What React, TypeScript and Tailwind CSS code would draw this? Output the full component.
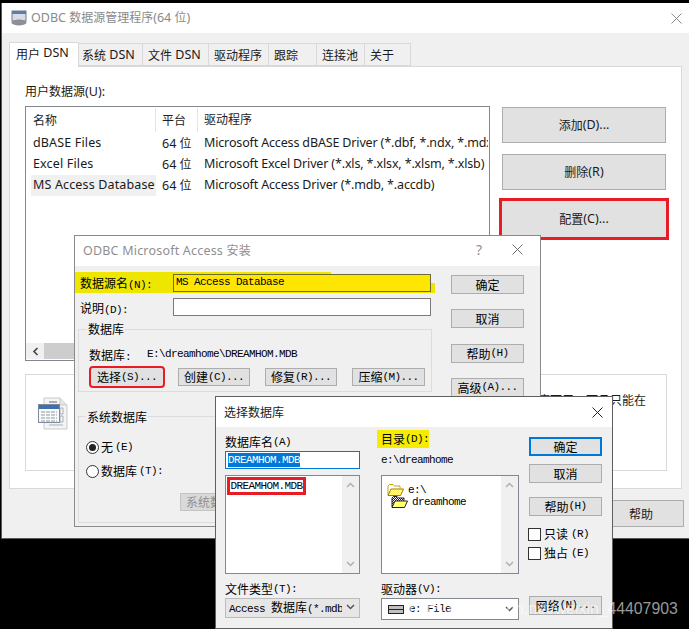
import React from "react";

const SANS = "font-['Noto_Sans','Noto_Sans_CJK_SC',sans-serif]";

function split(s: string) {
  return s.split(/([\u3000-\u9fff\uff00-\uffef]+)/).filter(Boolean);
}
const isCjk = (p: string) => /[\u3000-\u9fff\uff00-\uffef]/.test(p);

function M({ children }: { children: string }) {
  return (
    <>
      {split(children).map((p, i) =>
        isCjk(p) ? (
          <span key={i} className="font-['Noto_Sans_CJK_SC',sans-serif] text-[12px]">{p}</span>
        ) : (
          <span key={i} className="font-['Liberation_Mono',monospace] text-[11px] tracking-[-0.6px] whitespace-pre">{p}</span>
        )
      )}
    </>
  );
}

function S({ children }: { children: string }) {
  return (
    <>
      {split(children).map((p, i) =>
        isCjk(p) ? (
          <span key={i} className="font-['Noto_Sans_CJK_SC',sans-serif] text-[12px]">{p}</span>
        ) : (
          <span key={i} className="font-['Noto_Sans',sans-serif] text-[12.5px] whitespace-pre">{p}</span>
        )
      )}
    </>
  );
}

function DBtn({ children, className = "", edge = "border border-[#adadad]" }: { children: string; className?: string; edge?: string }) {
  return (
    <div className={`flex items-center justify-center bg-[#e1e1e1] text-black leading-none whitespace-nowrap ${edge} ${className}`}>
      <M>{children}</M>
    </div>
  );
}

function X({ className = "", color = "#6f6f6f" }: { className?: string; color?: string }) {
  return (
    <svg width="11" height="11" viewBox="0 0 11 11" className={className}>
      <path d="M0.5 0.5 L10.5 10.5 M10.5 0.5 L0.5 10.5" stroke={color} strokeWidth="1" fill="none" />
    </svg>
  );
}

function Chevron({ up = false, color = "#b0b0b0" }: { up?: boolean; color?: string }) {
  return (
    <svg width="9" height="6" viewBox="0 0 9 6">
      <path d={up ? "M1 5 L4.5 1.5 L8 5" : "M1 1 L4.5 4.5 L8 1"} stroke={color} strokeWidth="1.5" fill="none" />
    </svg>
  );
}

function ScrollV() {
  return (
    <div className="w-[17px] bg-[#f0f0f0] flex flex-col items-center justify-between py-[6px]">
      <Chevron up />
      <Chevron />
    </div>
  );
}

function Folder({ dither = false }: { dither?: boolean }) {
  const id = dither ? "d2" : "d1";
  return (
    <svg width="17" height="12" viewBox="0 0 17 12" className="shrink-0">
      <defs>
        <pattern id={id} width="2" height="2" patternUnits="userSpaceOnUse">
          <rect width="2" height="2" fill={dither ? "#ffff66" : "#ffe95a"} />
          <rect width="1" height="1" fill="#ffffff" />
          <rect x="1" y="1" width="1" height="1" fill="#ffffff" />
        </pattern>
        <pattern id={`${id}k`} width="2" height="2" patternUnits="userSpaceOnUse">
          <rect width="2" height="2" fill="#ffffff" />
          <rect width="1" height="1" fill="#222222" />
          <rect x="1" y="1" width="1" height="1" fill="#222222" />
        </pattern>
      </defs>
      <path
        d="M1 11 V2 L2.5 0.5 H6 L7.5 2 H13 V4.5"
        fill={dither ? `url(#${id}k)` : "#ffffff"}
        stroke={dither ? "#222" : "#c9a400"}
        strokeWidth="1"
      />
      <path d="M1 11.5 L4 5 H16.5 L13.5 11.5 Z" fill={`url(#${id})`} stroke={dither ? "#222" : "#9a8000"} strokeWidth="1" />
    </svg>
  );
}

function TableIcon() {
  return (
    <svg width="32" height="33" viewBox="0 0 32 33">
      <path d="M6 1 H22 L29 8 V32 H6 Z" fill="#f4f4f4" stroke="#c9c9c9" />
      <path d="M22 1 V8 H29" fill="#e6e6e6" stroke="#c9c9c9" />
      <path d="M22 11 h3 v6 h-3 z M22 19 h3 v6 h-3 z M11 28 h14" fill="none" stroke="#a8aeb6" />
      <path d="M11 5 h8" stroke="#a8aeb6" strokeWidth="2" />
      <rect x="0.5" y="7.5" width="21" height="18" fill="#fafafa" stroke="#7d8a9c" />
      <rect x="1" y="8" width="20" height="4" fill="#3f6fae" />
      <path d="M3 15 H19 M3 18 H19 M3 21 H19 M3 24 H19" stroke="#8d97a5" strokeDasharray="4 1" />
    </svg>
  );
}

const tabs: [string, string][] = [
  ["系统 DSN", "w-[64px] pl-[3px]"],
  ["文件 DSN", "w-[66px] pl-[5px]"],
  ["驱动程序", "w-[60px] pl-[5px]"],
  ["跟踪", "w-[48px] pl-[5px]"],
  ["连接池", "w-[48px] pl-[5px]"],
  ["关于", "w-[46px] pl-[5px]"],
];

const rows = [
  ["dBASE Files", "Microsoft Access dBASE Driver (*.dbf, *.ndx, *.mdx)"],
  ["Excel Files", "Microsoft Excel Driver (*.xls, *.xlsx, *.xlsm, *.xlsb)"],
  ["MS Access Database", "Microsoft Access Driver (*.mdb, *.accdb)"],
];

function MainWindow() {
  return (
    <div className={`absolute left-[1px] top-[3px] w-[688px] h-[536px] bg-[#f0f0f0] border-l border-b border-[#5a5a5a] ${SANS} text-[12.5px] text-[#1a1a1a]`}>
      <div className="h-[30px] bg-white flex items-center pl-[9px] pr-[7px]">
        <svg width="17" height="16" viewBox="0 0 17 16">
          <rect x="1" y="1" width="14" height="10" fill="#d7dce4" stroke="#6f7a88" />
          <rect x="1" y="1" width="14" height="3" fill="#5b7fa8" />
          <ellipse cx="8" cy="12.5" rx="7.5" ry="3" fill="#8c8f94" />
        </svg>
        <span className="ml-[3px] text-[#8a8a8a] leading-none"><S>ODBC 数据源管理程序(64 位)</S></span>
        <X className="ml-auto" color="#8a8a8a" />
      </div>
      <div className="pl-[7px] pr-[7px] pt-[9px]">
        <div className="flex h-[24px] items-end">
          <div className="w-[70px] h-[25px] bg-white border border-b-0 border-[#d9d9d9] flex items-center pl-[6px] relative z-10 -mb-px pb-[3px]"><S>用户 DSN</S></div>
          {tabs.map(([t, w]) => (
            <div key={t} className={`${w} h-[23px] pt-[1px] bg-[#f0f0f0] border border-l-0 border-[#d9d9d9] flex items-center`}><S>{t}</S></div>
          ))}
        </div>
        <div className="h-[423px] bg-white border border-[#d9d9d9] px-[15px] pt-[15px]">
          <div className="h-[17px] leading-[17px]"><S>用户数据源(U):</S></div>
          <div className="flex mt-[7px] h-[255px]">
            <div className="w-[465px] h-[255px] border border-[#828790] relative overflow-hidden pl-[5px] pr-[1px]">
              <div className="flex h-[26px] items-center text-[#222]">
                <div className="w-[125px] h-[24px] pl-[2px] border-r border-[#e5e5e5] flex items-center"><S>名称</S></div>
                <div className="w-[42px] h-[24px] pl-[6px] border-r border-[#e5e5e5] flex items-center"><S>平台</S></div>
                <div className="pl-[6px]"><S>驱动程序</S></div>
              </div>
              {rows.map(([a, b], i) => (
                <div key={a} className="flex h-[21px] items-center whitespace-nowrap">
                  <div className={`w-[125px] h-full flex items-center pl-[2px] shrink-0 tracking-[0.15px] ${i === 2 ? "bg-[#f0f0f0]" : ""}`}>{a}</div>
                  <div className="w-[48px] pl-[6px] shrink-0"><S>64 位</S></div>
                  <div className="overflow-hidden w-[284px] tracking-[-0.15px]">{b}</div>
                </div>
              ))}
              <div className="absolute left-0 right-0 top-[236px] h-[16px] bg-[#f0f0f0] flex items-center pl-[6px]">
                <svg width="7" height="9" viewBox="0 0 7 9"><path d="M5.5 1 L2 4.5 L5.5 8" stroke="#444" strokeWidth="1.6" fill="none" /></svg>
                <div className="ml-[5px] w-[120px] h-full bg-[#cdcdcd]" />
              </div>
            </div>
            <div className="ml-[12px] w-[164px] flex flex-col gap-[11px] pt-[1px]">
              <div className="h-[36px] bg-[#e1e1e1] border border-[#adadad] flex items-center justify-center"><S>添加(D)...</S></div>
              <div className="h-[36px] bg-[#e1e1e1] border border-[#adadad] flex items-center justify-center"><S>删除(R)</S></div>
              <div className="h-[36px] bg-[#e1e1e1] flex items-center justify-center outline-[3px] outline-[#e81c24]"><S>配置(C)...</S></div>
            </div>
          </div>
          <div className="mt-[13px] h-[97px] w-[642px] border border-[#d9d9d9] flex items-start pl-[12px] pt-[22px]">
            <TableIcon />
            <span className="ml-auto mr-[20px] -mt-[3px] leading-none"><S>程序可用，而且只能在</S></span>
          </div>
        </div>
        <div className="flex justify-end mt-[11px] -mr-[2px]">
          <div className="w-[86px] h-[27px] bg-[#e1e1e1] border border-[#adadad] flex items-center justify-center"><S>帮助</S></div>
        </div>
      </div>
    </div>
  );
}

function AccessWindow() {
  return (
    <div className="absolute left-[74px] top-[235px] w-[467px] h-[292px] bg-[#f0f0f0] border border-[#8a8a8a]">
      <div className="h-[30px] bg-white flex items-center pl-[8px] pr-[17px] pb-[3px]">
        <span className="text-[#8f8f8f] leading-none tracking-[0.2px]"><S>ODBC Microsoft Access 安装</S></span>
        <span className={`${SANS} ml-auto mr-[30px] text-[14px] text-[#8f8f8f]`}>?</span>
        <X />
      </div>
      <div className="flex">
        <div className="w-[357px] pl-[3px] pt-[6px]">
          <div className="flex items-center h-[21px] relative">
            <div className="absolute left-[-3px] top-0 w-[256px] h-[21px] bg-[#efe600]" />
            <div className="absolute left-[253px] top-[11px] w-[104px] h-[10px] bg-[#efe600]" />
            <span className="relative w-[95px] pl-[2px] leading-none"><M>数据源名(N):</M></span>
            <div className="relative w-[258px] h-[18px] border border-[#6b6b3a] bg-[#ffe600] flex items-center pl-[2px] leading-none"><M>MS Access Database</M></div>
          </div>
          <div className="flex items-center h-[18px] mt-[5px]">
            <span className="w-[95px] pl-[2px] leading-none"><M>说明(D):</M></span>
            <div className="w-[258px] h-[18px] border border-[#7a7a7a] bg-white" />
          </div>
          <div className="relative mt-[13px] h-[63px] border border-[#dcdcdc] w-[354px] pl-[10px] pt-[17px]">
            <span className="absolute left-[8px] -top-[10px] bg-[#f0f0f0] px-[1px] leading-[16px]"><M>数据库</M></span>
            <div className="flex items-center h-[14px] leading-none">
              <span className="w-[58px]"><M>数据库:</M></span>
              <M>{"E:\\dreamhome\\DREAMHOM.MDB"}</M>
            </div>
            <div className="flex mt-[7px] ml-[2px] gap-[15px] leading-none">
              <DBtn edge="outline-[2px] outline-[#e81c24] rounded-[2px]" className="w-[72px] h-[18px]">选择(S)...</DBtn>
              <DBtn className="w-[72px] h-[18px]">创建(C)...</DBtn>
              <DBtn className="w-[72px] h-[18px]">修复(R)...</DBtn>
              <DBtn className="w-[73px] h-[18px]">压缩(M)...</DBtn>
            </div>
          </div>
          <div className="relative mt-[24px] h-[107px] border border-[#dcdcdc] w-[354px] pl-[7px]">
            <span className="absolute left-[7px] -top-[9px] bg-[#f0f0f0] px-[1px] leading-[16px]"><M>系统数据库</M></span>
            <div className="flex items-center h-[14px] mt-[23px] gap-[2px] leading-none">
              <span className="w-[13px] h-[13px] rounded-full border border-[#333] bg-white flex items-center justify-center"><span className="w-[7px] h-[7px] rounded-full bg-[#222]" /></span>
              <M>无(E)</M>
            </div>
            <div className="flex items-center h-[14px] mt-[10px] gap-[2px] leading-none">
              <span className="w-[13px] h-[13px] rounded-full border border-[#333] bg-white" />
              <M>数据库(T):</M>
            </div>
            <div className="ml-[94px] mt-[15px] w-[100px] h-[18px] bg-[#d9d9d9] border border-[#c4c4c4] flex items-center pl-[5px] text-[#8f8f8f] text-[12px] font-['Noto_Sans_CJK_SC',sans-serif] leading-none">系统数据库</div>
          </div>
        </div>
        <div className="ml-[19px] pt-[9px] flex flex-col">
          <DBtn className="w-[73px] h-[19px]">确定</DBtn>
          <DBtn className="w-[73px] h-[19px] mt-[15px]">取消</DBtn>
          <DBtn className="w-[73px] h-[19px] mt-[16px]">帮助(H)</DBtn>
          <DBtn className="w-[73px] h-[19px] mt-[15px]">高级(A)...</DBtn>
        </div>
      </div>
    </div>
  );
}

function SelectWindow() {
  return (
    <div className="absolute left-[215px] top-[396px] w-[398px] h-[233px] bg-[#f0f0f0] border border-[#5f5f5f]">
      <div className="h-[30px] bg-white flex items-center pl-[8px] pr-[9px]">
        <span className="font-['Noto_Sans_CJK_SC',sans-serif] text-[12px] text-[#222]">选择数据库</span>
        <X className="ml-auto" color="#222" />
      </div>
      <div className="flex pl-[9px] pt-[6px]">
        <div className="w-[135px]">
          <div className="h-[18px] flex items-center leading-none"><M>数据库名(A)</M></div>
          <div className="h-[18px] border border-[#0078d7] bg-white flex items-center pl-[2px] leading-none">
            <span className="bg-[#0078d7] text-white h-[14px] flex items-center"><M>DREAMHOM.MDB</M></span>
          </div>
          <div className="mt-[6px] h-[99px] border border-[#828790] bg-white flex justify-between relative">
            <div className="absolute left-[1px] top-[1px] w-[79px] h-[18px] border-[3px] border-[#e81c24] flex items-center justify-center leading-none"><M>DREAMHOM.MDB</M></div>
            <div className="flex-1" />
            <ScrollV />
          </div>
          <div className="h-[16px] mt-[7px] flex items-center leading-none"><M>文件类型(T):</M></div>
          <div className="h-[20px] mt-[1px] pb-[3px] bg-[#e6e6e6] border border-[#bcbcbc] flex items-center pl-[3px] pr-[4px] leading-none whitespace-nowrap justify-between">
            <span className="w-[113px] overflow-hidden"><M>Access 数据库(*.mdb)</M></span>
            <Chevron color="#555" />
          </div>
        </div>
        <div className="w-[138px] ml-[21px]">
          <div className="h-[18px] -mt-[3px] mb-[3px] w-[52px] -ml-[4px] pl-[4px] bg-[#f5ec00] flex items-center leading-none whitespace-nowrap"><M>目录(D):</M></div>
          <div className="h-[18px] flex items-center leading-none"><M>{"e:\\dreamhome"}</M></div>
          <div className="mt-[6px] h-[99px] border border-[#828790] bg-white flex">
            <div className="flex-1 pl-[5px] pt-[8px]">
              <div className="flex items-center h-[12px] gap-[4px] leading-none"><Folder /><M>{"e:\\"}</M></div>
              <div className="flex items-center h-[12px] gap-[4px] ml-[4px] leading-none"><Folder dither /><M>dreamhome</M></div>
            </div>
            <ScrollV />
          </div>
          <div className="h-[16px] mt-[7px] flex items-center leading-none"><M>驱动器(V):</M></div>
          <div className="h-[22px] mt-[1px] bg-white border border-[#828790] flex items-center pl-[6px] pr-[4px] leading-none justify-between">
            <span className="flex items-center gap-[5px]">
              <span className="w-[16px] h-[9px] bg-[#c0c0c0] border border-[#222] flex flex-col justify-center"><span className="h-px bg-[#222]" /></span>
              <M>e: File</M>
            </span>
            <Chevron color="#555" />
          </div>
        </div>
        <div className="ml-[10px] w-[73px] flex flex-col">
          <DBtn edge="border-2 border-[#0078d7]" className="h-[19px] mt-[4px]">确定</DBtn>
          <DBtn className="h-[19px] mt-[8px]">取消</DBtn>
          <DBtn className="h-[19px] mt-[14px]">帮助(H)</DBtn>
          <div className="flex items-center h-[14px] mt-[11px] -ml-[1px] gap-[3px] leading-none whitespace-nowrap">
            <span className="w-[13px] h-[13px] border border-[#333] bg-white" /><M>只读(R)</M>
          </div>
          <div className="flex items-center h-[14px] mt-[5px] -ml-[1px] gap-[3px] leading-none whitespace-nowrap">
            <span className="w-[13px] h-[13px] border border-[#333] bg-white" /><M>独占(E)</M>
          </div>
          <DBtn className="h-[19px] mt-[36px]">网络(N)...</DBtn>
        </div>
      </div>
    </div>
  );
}

export default function App() {
  return (
    <div className="relative w-[689px] h-[629px] bg-black overflow-hidden">
      <MainWindow />
      <AccessWindow />
      <SelectWindow />
      <span className="absolute left-[409px] top-[599px] font-['Liberation_Sans',sans-serif] text-[15.8px] leading-[20px] text-white/60 whitespace-nowrap">https://blog.csdn.net/weixin_44407903</span>
    </div>
  );
}
